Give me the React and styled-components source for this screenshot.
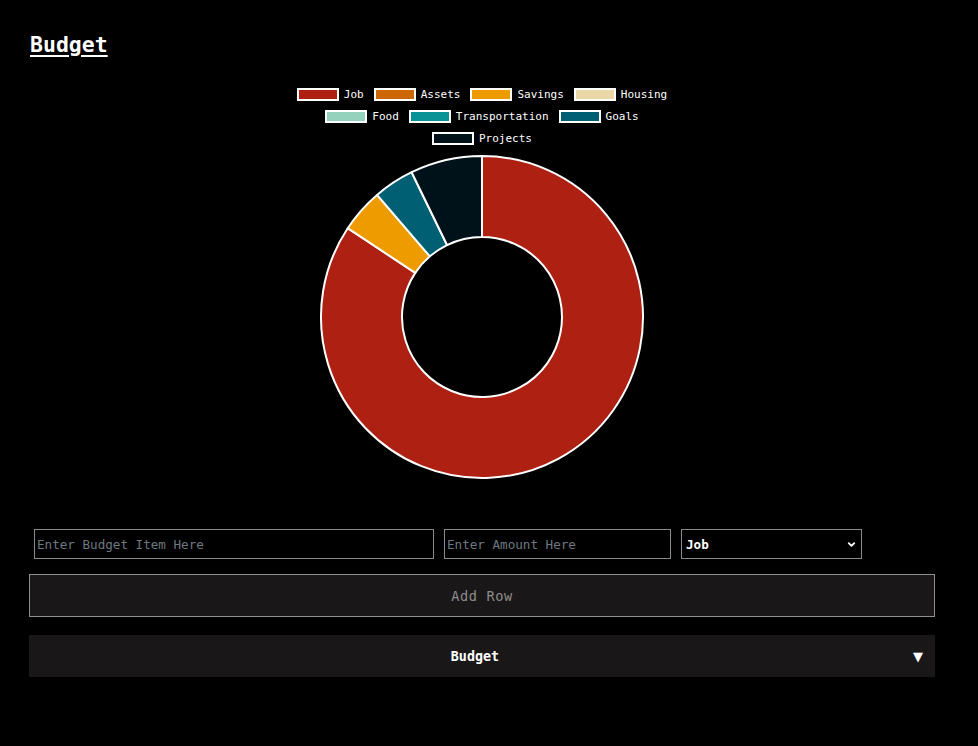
import React from "react";
import styled, { createGlobalStyle } from "styled-components";
import { ChevronDown } from "lucide-react";

const GlobalStyle = createGlobalStyle`
  html, body {
    margin: 0;
    padding: 0;
    background: #000;
    color: #fff;
    font-family: "DejaVu Sans Mono", "Liberation Mono", monospace;
  }
`;

const Page = styled.div`
  padding: 30px 43px 60px 29px;
`;

const Title = styled.h2`
  margin: 0 0 0 1px;
  font-size: 21.5px;
  font-weight: bold;
  line-height: 30px;
  text-decoration: underline;
  text-underline-offset: 3px;
  text-decoration-thickness: 2px;
`;

const ChartWrap = styled.div`
  display: flex;
  flex-direction: column;
  align-items: center;
  margin-top: 28px;
`;

const Legend = styled.div`
  display: flex;
  flex-direction: column;
  align-items: center;
  gap: 9px;
`;

const LegendRow = styled.div`
  display: flex;
  gap: 10px;
  height: 13px;
  align-items: center;
`;

const LegendItem = styled.div`
  display: flex;
  align-items: center;
  gap: 5px;
  font-size: 11px;
  line-height: 13px;
`;

const Swatch = styled.span`
  width: 38px;
  height: 9px;
  border: 2px solid #fff;
  background: ${(p) => p.color};
`;

const Donut = styled.svg`
  display: block;
  margin-top: 9px;
`;

const InputRow = styled.div`
  display: flex;
  gap: 10px;
  margin: 49px 0 0 5px;
`;

const TextInput = styled.input`
  box-sizing: border-box;
  width: ${(p) => p.w}px;
  height: 30px;
  background: #000;
  border: 1px solid #8a8a8a;
  color: #fff;
  font-family: inherit;
  font-size: 12.6px;
  padding: 0 2px;
  outline: none;
  &::placeholder {
    color: #6e7880;
  }
`;

const SelectWrap = styled.div`
  position: relative;
  width: 181px;
  height: 30px;
`;

const Select = styled.select`
  box-sizing: border-box;
  width: 100%;
  height: 100%;
  appearance: none;
  background: #000;
  border: 1px solid #8a8a8a;
  color: #fff;
  font-family: inherit;
  font-size: 12.6px;
  font-weight: bold;
  padding: 0 4px;
  outline: none;
`;

const Chevron = styled(ChevronDown)`
  position: absolute;
  right: 5px;
  top: 10px;
  pointer-events: none;
`;

const AddButton = styled.button`
  box-sizing: border-box;
  display: block;
  width: 906px;
  height: 43px;
  margin-top: 15px;
  background: #1a1718;
  border: 1px solid #8f8f8f;
  color: #8c8c8c;
  font-family: inherit;
  font-size: 13.6px;
  letter-spacing: 0.6px;
`;

const Collapsible = styled.div`
  display: flex;
  align-items: center;
  width: 906px;
  height: 42px;
  margin-top: 18px;
  padding-right: 12px;
  box-sizing: border-box;
  background: #1a1718;
  font-size: 13.4px;
  font-weight: bold;
`;

const CollapsibleLabel = styled.span`
  flex: 1;
  padding-left: 8px;
  text-align: center;
`;

const Caret = styled.span`
  font-size: 13px;
  font-family: "DejaVu Sans", sans-serif;
`;

const legendRows = [
  [
    { label: "Job", color: "#ae2012" },
    { label: "Assets", color: "#ca6702" },
    { label: "Savings", color: "#ee9b00" },
    { label: "Housing", color: "#e9d8a6" },
  ],
  [
    { label: "Food", color: "#94d2bd" },
    { label: "Transportation", color: "#0a9396" },
    { label: "Goals", color: "#005f73" },
  ],
  [{ label: "Projects", color: "#001219" }],
];

const slices = [
  { value: 843, color: "#ae2012" },
  { value: 44, color: "#ee9b00" },
  { value: 41, color: "#005f73" },
  { value: 72, color: "#001219" },
];

const arcPath = (cx, cy, r1, r2, a0, a1) => {
  const pt = (r, a) => [cx + r * Math.sin(a), cy - r * Math.cos(a)];
  const large = a1 - a0 > Math.PI ? 1 : 0;
  const [x0, y0] = pt(r2, a0);
  const [x1, y1] = pt(r2, a1);
  const [x2, y2] = pt(r1, a1);
  const [x3, y3] = pt(r1, a0);
  return `M${x0} ${y0} A${r2} ${r2} 0 ${large} 1 ${x1} ${y1} L${x2} ${y2} A${r1} ${r1} 0 ${large} 0 ${x3} ${y3} Z`;
};

const DonutChart = () => {
  const total = slices.reduce((s, d) => s + d.value, 0);
  let start = 0;
  return (
    <Donut width="326" height="326" viewBox="0 0 326 326">
      {slices.map((s, i) => {
        const end = start + (s.value / total) * Math.PI * 2;
        const d = arcPath(163, 163, 80, 161, start, end);
        start = end;
        return (
          <path key={i} d={d} fill={s.color} stroke="#fff" strokeWidth="2" strokeLinejoin="round" />
        );
      })}
    </Donut>
  );
};

export default function App() {
  return (
    <>
      <GlobalStyle />
      <Page>
        <Title>Budget</Title>
        <ChartWrap>
          <Legend>
            {legendRows.map((row, i) => (
              <LegendRow key={i}>
                {row.map((item) => (
                  <LegendItem key={item.label}>
                    <Swatch color={item.color} />
                    {item.label}
                  </LegendItem>
                ))}
              </LegendRow>
            ))}
          </Legend>
          <DonutChart />
        </ChartWrap>
        <InputRow>
          <TextInput w={400} placeholder="Enter Budget Item Here" />
          <TextInput w={227} placeholder="Enter Amount Here" />
          <SelectWrap>
            <Select defaultValue="Job">
              {legendRows.flat().map((item) => (
                <option key={item.label}>{item.label}</option>
              ))}
            </Select>
            <Chevron size={11} strokeWidth={4} color="#fff" />
          </SelectWrap>
        </InputRow>
        <AddButton>Add Row</AddButton>
        <Collapsible>
          <CollapsibleLabel>Budget</CollapsibleLabel>
          <Caret>▼</Caret>
        </Collapsible>
      </Page>
    </>
  );
}
